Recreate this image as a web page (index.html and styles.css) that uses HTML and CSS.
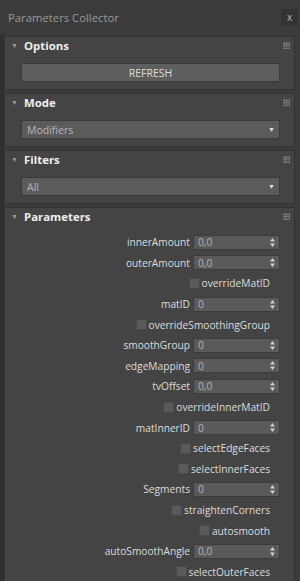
FILE: index.html
```html
<!DOCTYPE html>
<html lang="en">
<head>
    <meta charset="UTF-8">
    <meta name="viewport" content="width=device-width, initial-scale=1.0">
    <title>Parameters Collector</title>
    <link rel="stylesheet" href="styles.css">
</head>
<body>
    <div class="titlebar">
        <span class="title">Parameters Collector</span>
        <span class="close">x</span>
    </div>
    <div class="panels">
        <!-- Options -->
        <div class="rollout">
            <div class="rollout-head"><span class="arrow">&#9660;</span>Options<span class="grip"></span></div>
            <div class="rollout-body">
                <button class="btn">REFRESH</button>
            </div>
        </div>
        <!-- Mode -->
        <div class="rollout">
            <div class="rollout-head"><span class="arrow">&#9660;</span>Mode<span class="grip"></span></div>
            <div class="rollout-body">
                <div class="dropdown">Modifiers<span class="drop-arrow">&#9660;</span></div>
            </div>
        </div>
        <!-- Filters -->
        <div class="rollout">
            <div class="rollout-head"><span class="arrow">&#9660;</span>Filters<span class="grip"></span></div>
            <div class="rollout-body">
                <div class="dropdown">All<span class="drop-arrow">&#9660;</span></div>
            </div>
        </div>
        <!-- Parameters -->
        <div class="rollout params">
            <div class="rollout-head"><span class="arrow">&#9660;</span>Parameters<span class="grip"></span></div>
            <div class="rollout-body param-list">
                <div class="row"><label>innerAmount</label><div class="spinner">0,0<svg class="spin" viewBox="0 0 5 9"><path d="M2.5 0 L5 3.5 L0 3.5 Z M2.5 9 L5 5.5 L0 5.5 Z"/></svg></div></div>
                <div class="row"><label>outerAmount</label><div class="spinner">0,0<svg class="spin" viewBox="0 0 5 9"><path d="M2.5 0 L5 3.5 L0 3.5 Z M2.5 9 L5 5.5 L0 5.5 Z"/></svg></div></div>
                <div class="row check"><span class="box"></span><label>overrideMatID</label></div>
                <div class="row"><label>matID</label><div class="spinner">0<svg class="spin" viewBox="0 0 5 9"><path d="M2.5 0 L5 3.5 L0 3.5 Z M2.5 9 L5 5.5 L0 5.5 Z"/></svg></div></div>
                <div class="row check"><span class="box"></span><label>overrideSmoothingGroup</label></div>
                <div class="row"><label>smoothGroup</label><div class="spinner">0<svg class="spin" viewBox="0 0 5 9"><path d="M2.5 0 L5 3.5 L0 3.5 Z M2.5 9 L5 5.5 L0 5.5 Z"/></svg></div></div>
                <div class="row"><label>edgeMapping</label><div class="spinner">0<svg class="spin" viewBox="0 0 5 9"><path d="M2.5 0 L5 3.5 L0 3.5 Z M2.5 9 L5 5.5 L0 5.5 Z"/></svg></div></div>
                <div class="row"><label>tvOffset</label><div class="spinner">0,0<svg class="spin" viewBox="0 0 5 9"><path d="M2.5 0 L5 3.5 L0 3.5 Z M2.5 9 L5 5.5 L0 5.5 Z"/></svg></div></div>
                <div class="row check"><span class="box"></span><label>overrideInnerMatID</label></div>
                <div class="row"><label>matInnerID</label><div class="spinner">0<svg class="spin" viewBox="0 0 5 9"><path d="M2.5 0 L5 3.5 L0 3.5 Z M2.5 9 L5 5.5 L0 5.5 Z"/></svg></div></div>
                <div class="row check"><span class="box"></span><label>selectEdgeFaces</label></div>
                <div class="row check"><span class="box"></span><label>selectInnerFaces</label></div>
                <div class="row"><label>Segments</label><div class="spinner">0<svg class="spin" viewBox="0 0 5 9"><path d="M2.5 0 L5 3.5 L0 3.5 Z M2.5 9 L5 5.5 L0 5.5 Z"/></svg></div></div>
                <div class="row check"><span class="box"></span><label>straightenCorners</label></div>
                <div class="row check"><span class="box"></span><label>autosmooth</label></div>
                <div class="row"><label>autoSmoothAngle</label><div class="spinner">0,0<svg class="spin" viewBox="0 0 5 9"><path d="M2.5 0 L5 3.5 L0 3.5 Z M2.5 9 L5 5.5 L0 5.5 Z"/></svg></div></div>
                <div class="row check"><span class="box"></span><label>selectOuterFaces</label></div>
            </div>
        </div>
    </div>
</body>
</html>
```

FILE: styles.css
```css
body {
    margin: 0;
    padding: 0;
    width: 300px;
    height: 581px;
    overflow: hidden;
    background-color: #3b3b3b;
    font-family: 'Open Sans', 'Noto Sans', sans-serif;
    font-size: 10.2px;
    color: #dcdcdc;
}
.titlebar {
    height: 34px;
    display: flex;
    align-items: center;
    justify-content: space-between;
    padding: 0 2px 0 8px;
}
.title {
    color: #9a9a9a;
    font-size: 11.3px;
}
.close {
    width: 17px;
    height: 17px;
    background-color: #333;
    color: #bbb;
    font-size: 10px;
    display: flex;
    align-items: center;
    justify-content: center;
}
.panels {
    border-left: 4px solid #303030;
    padding: 2px 5px 0 0;
}
.rollout {
    background-color: #444;
    border: 1px solid #333;
    margin-bottom: 3px;
}
.rollout-head {
    height: 17px;
    display: flex;
    align-items: center;
    font-weight: bold;
    font-size: 11.4px;
    color: #eee;
}
.arrow {
    font-size: 7px;
    color: #999;
    width: 19px;
    text-align: center;
}
.grip {
    margin-left: auto;
    margin-right: 4px;
    width: 7px;
    height: 7px;
    background-image: radial-gradient(circle, #888 0.8px, transparent 1px);
    background-size: 2.5px 2.5px;
}
.rollout-body {
    padding: 9px 14px 7px 16px;
}
.btn {
    display: block;
    width: 100%;
    height: 19px;
    background-color: #5e5e5e;
    border: 1px solid #3a3a3a;
    border-radius: 2px;
    color: #ddd;
    font-family: inherit;
    font-size: 10.5px;
    padding: 0;
}
.dropdown {
    height: 19px;
    background-color: #5b5b5b;
    border: 1px solid #3a3a3a;
    box-sizing: border-box;
    display: flex;
    align-items: center;
    padding-left: 5px;
    color: #b8b8b8;
    font-size: 10.5px;
}
.drop-arrow {
    margin-left: auto;
    margin-right: 4px;
    font-size: 7px;
    color: #ddd;
}
.param-list {
    padding: 7px 14px 0 0;
}
.row {
    height: 20.6px;
    display: flex;
    align-items: center;
    justify-content: flex-end;
    gap: 3px;
}
.row label {
    color: #dcdcdc;
}
.row.check {
    padding-right: 10px;
    gap: 2px;
}
.spinner {
    width: 87px;
    height: 15px;
    background-color: #5a5a5a;
    border: 1px solid #3c3c3c;
    box-sizing: border-box;
    display: flex;
    align-items: center;
    padding-left: 4px;
    color: #b5b5b5;
    position: relative;
}
.spin {
    position: absolute;
    right: 4px;
    top: 2px;
    width: 5px;
    height: 9px;
    fill: #d0d0d0;
}
.box {
    width: 11px;
    height: 11px;
    background-color: #5a5a5a;
    border: 1px solid #4a4a4a;
    box-sizing: border-box;
}
```
